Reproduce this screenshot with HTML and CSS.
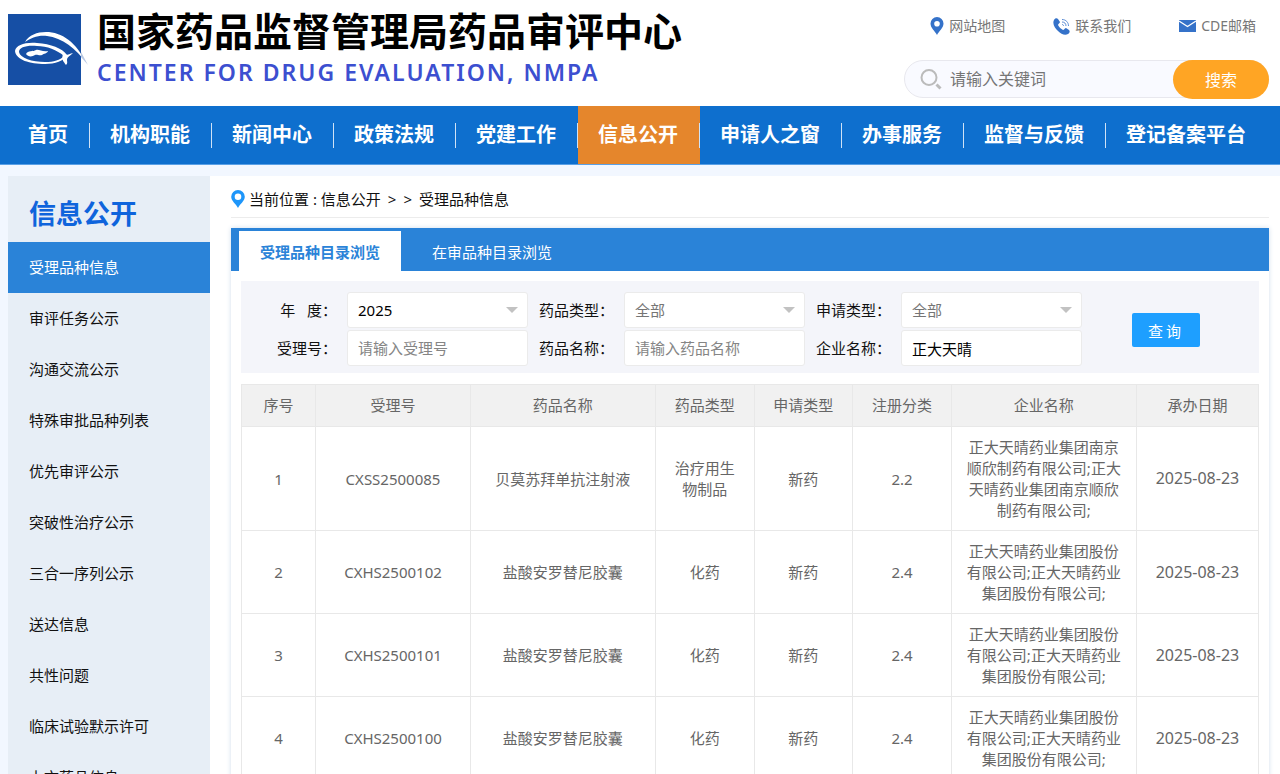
FILE: index.html
```html
<!DOCTYPE html>
<html lang="zh-CN">

<head>
  <meta charset="utf-8">
  <meta name="viewport" content="width=device-width, initial-scale=1">
  <title>国家药品监督管理局药品审评中心</title>
  <link rel="stylesheet" href="styles.css">
</head>

<body>
  <header class="header">
    <div class="logo">
      <svg class="logo-mark" viewBox="0 0 80 72" width="80" height="72" aria-hidden="true">
        <rect width="73" height="71" fill="#164fa5"/>
        <path d="M17 28C21 21 29 18 38 18C54 18 68 28 79 50C68 34 54 24 39 22C30 21 23 24 17 28Z" fill="#fff"/>
        <path d="M73 38L80 51L73 43Z" fill="#b9c8e2"/>
        <path fill="#fff" fill-rule="evenodd" d="M7 37C8 31 17 28 29 29C43 30 54 34 59 41C56 47 47 50 37 50C22 50 8 46 7 37ZM11 38C12 44 24 48 37 48C46 48 52 46 56 42C49 36 39 32 29 32C19 31 11 33 11 38Z"/>
        <path d="M55 40C58 42 61 40 65 39C62 42 59 43 59 46C59 48 60 49 58 51C56 48 53 46 55 40Z" fill="#fff"/>
        <path d="M18 40C20 36 25 38 28 36C31 35 34 38 40 37C39 40 36 39 34 41C31 42 29 40 27 41C24 43 20 43 18 40Z" fill="#fff"/>
      </svg>
      <div>
        <h1 class="logo-title">国家药品监督管理局药品审评中心</h1>
        <p class="logo-sub">CENTER FOR DRUG EVALUATION, NMPA</p>
      </div>
    </div>
    <div class="header-right">
      <div class="links">
        <a href="#">
          <svg viewBox="0 0 14 18" width="14" height="18" aria-hidden="true"><path fill="#3572c9" fill-rule="evenodd" d="M7 0A6.5 6.5 0 0 0 .5 6.500C.5 11 5 14 7 18C9 14 13.500 11 13.500 6.500A6.500 6.500 0 0 0 7 0ZM7 4A2.800 2.800 0 1 1 7 9.600A2.800 2.800 0 1 1 7 4Z"/></svg>
          网站地图
        </a>
        <a href="#">
          <svg viewBox="0 0 17 17" width="17" height="17" aria-hidden="true"><path fill="#3572c9" d="M1 2C2 0 4 0 5 1L7 4C7 5 5 6 5 7C6 9 8 11 10 12C11 12 12 10 13 10L16 12C17 13 17 15 15 16C12 18 8 16 5 13C2 10-1 6 1 2Z"/><path fill="none" stroke="#5c8dd4" d="M9 1.500C13 1.500 15.500 4.500 15.500 8M9 4C11.500 4 13 5.500 13 8M9 6.500C10 6.500 10.500 7 10.500 8"/></svg>
          联系我们
        </a>
        <a href="#">
          <svg viewBox="0 0 17 12" width="17" height="12" aria-hidden="true"><rect width="17" height="12" fill="#3572c9"/><path d="M0 1L8.500 6.500L17 1" fill="none" stroke="#fff" stroke-width="1.200"/></svg>
          CDE邮箱
        </a>
      </div>
      <form class="search">
        <svg viewBox="0 0 22 21" width="22" height="21" aria-hidden="true"><circle cx="9" cy="8.500" r="7.500" fill="none" stroke="#bbb" stroke-width="2"/><path d="M16.500 15.500L20.500 19.500" stroke="#bbb" stroke-width="3"/></svg>
        <input type="text" placeholder="请输入关键词" aria-label="请输入关键词">
        <button type="button">搜索</button>
      </form>
    </div>
  </header>

  <nav class="nav">
    <a href="#">首页</a>
    <a href="#">机构职能</a>
    <a href="#">新闻中心</a>
    <a href="#">政策法规</a>
    <a href="#">党建工作</a>
    <a href="#" class="active">信息公开</a>
    <a href="#">申请人之窗</a>
    <a href="#">办事服务</a>
    <a href="#">监督与反馈</a>
    <a href="#">登记备案平台</a>
  </nav>

  <div class="container">
    <aside class="side">
      <h2>信息公开</h2>
      <a href="#" class="active">受理品种信息</a>
      <a href="#">审评任务公示</a>
      <a href="#">沟通交流公示</a>
      <a href="#">特殊审批品种列表</a>
      <a href="#">优先审评公示</a>
      <a href="#">突破性治疗公示</a>
      <a href="#">三合一序列公示</a>
      <a href="#">送达信息</a>
      <a href="#">共性问题</a>
      <a href="#">临床试验默示许可</a>
      <a href="#">上市药品信息</a>
    </aside>

    <main class="main">
      <div class="crumb">
        <svg viewBox="0 0 14 18" width="14" height="18" aria-hidden="true"><path fill="#1e96fa" fill-rule="evenodd" d="M7 0A6.800 6.800 0 0 0 .2 6.800C.2 11 5 14 7 18C9 14 13.800 11 13.800 6.800A6.800 6.800 0 0 0 7 0ZM7 3.500A3.300 3.300 0 1 1 7 10.100A3.300 3.300 0 1 1 7 3.500Z"/></svg>
        <span>当前位置 : <a href="#">信息公开</a></span>
        <span>&gt;</span>
        <span>&gt;</span>
        <a href="#">受理品种信息</a>
      </div>

      <div class="panel">
        <div class="tabs">
          <button type="button" class="active">受理品种目录浏览</button>
          <button type="button">在审品种目录浏览</button>
        </div>

        <form class="filter">
          <div class="field">
            <label for="year">年&nbsp;&nbsp;&nbsp;度：</label>
            <div class="select"><select id="year" class="filled"><option>2025</option></select></div>
          </div>
          <div class="field">
            <label for="drugtype">药品类型：</label>
            <div class="select"><select id="drugtype"><option>全部</option></select></div>
          </div>
          <div class="field">
            <label for="applytype">申请类型：</label>
            <div class="select"><select id="applytype"><option>全部</option></select></div>
          </div>
          <button type="button" class="query">查询</button>
          <div class="field">
            <label for="acceptid">受理号：</label>
            <input type="text" id="acceptid" placeholder="请输入受理号">
          </div>
          <div class="field">
            <label for="drugname">药品名称：</label>
            <input type="text" id="drugname" placeholder="请输入药品名称">
          </div>
          <div class="field">
            <label for="company">企业名称：</label>
            <input type="text" id="company" value="正大天晴">
          </div>
        </form>

        <table class="list">
          <thead>
            <tr>
              <th class="c-no">序号</th>
              <th class="c-id">受理号</th>
              <th class="c-name">药品名称</th>
              <th class="c-type">药品类型</th>
              <th class="c-type">申请类型</th>
              <th class="c-type">注册分类</th>
              <th class="c-name">企业名称</th>
              <th class="c-date">承办日期</th>
            </tr>
          </thead>
          <tbody>
            <tr>
              <td>1</td>
              <td>CXSS2500085</td>
              <td>贝莫苏拜单抗注射液</td>
              <td>治疗用生物制品</td>
              <td>新药</td>
              <td>2.2</td>
              <td>正大天晴药业集团南京顺欣制药有限公司;正大天晴药业集团南京顺欣制药有限公司;</td>
              <td class="date">2025-08-23</td>
            </tr>
            <tr>
              <td>2</td>
              <td>CXHS2500102</td>
              <td>盐酸安罗替尼胶囊</td>
              <td>化药</td>
              <td>新药</td>
              <td>2.4</td>
              <td>正大天晴药业集团股份有限公司;正大天晴药业集团股份有限公司;</td>
              <td class="date">2025-08-23</td>
            </tr>
            <tr>
              <td>3</td>
              <td>CXHS2500101</td>
              <td>盐酸安罗替尼胶囊</td>
              <td>化药</td>
              <td>新药</td>
              <td>2.4</td>
              <td>正大天晴药业集团股份有限公司;正大天晴药业集团股份有限公司;</td>
              <td class="date">2025-08-23</td>
            </tr>
            <tr>
              <td>4</td>
              <td>CXHS2500100</td>
              <td>盐酸安罗替尼胶囊</td>
              <td>化药</td>
              <td>新药</td>
              <td>2.4</td>
              <td>正大天晴药业集团股份有限公司;正大天晴药业集团股份有限公司;</td>
              <td class="date">2025-08-23</td>
            </tr>
          </tbody>
        </table>
      </div>
    </main>
  </div>
</body>

</html>
```
FILE: styles.css
```css
* {
  box-sizing: border-box;
}

body {
  margin: 0;
  background: #f2f7ff;
  color: #111;
  font-family: "Noto Sans", "Noto Sans CJK SC", sans-serif;
  font-size: 15px;
  line-height: 21px;
}

a {
  color: inherit;
  text-decoration: none;
}

h1, h2, p {
  margin: 0;
}

button, input, select {
  font-family: inherit;
  font-size: 15px;
}

svg {
  flex: none;
}

/* header */
.header {
  display: flex;
  justify-content: space-between;
  height: 106px;
  padding: 0 11px 0 8px;
  background: #fff;
}

.logo {
  display: flex;
  gap: 9px;
  white-space: nowrap;
}

.logo-mark {
  margin-top: 14px;
}

.logo-title {
  margin-top: 10px;
  color: #000;
  font-size: 39px;
  line-height: 42px;
}

.logo-sub {
  color: #3c4fd0;
  font-size: 23px;
  font-weight: 600;
  line-height: 40px;
  letter-spacing: 2px;
}

.header-right {
  width: 365px;
  padding-top: 15px;
}

.links {
  display: flex;
  justify-content: flex-end;
  gap: 48px;
  padding-right: 13px;
  color: #777;
  font-size: 14px;
  line-height: 22px;
}

.links a {
  display: flex;
  align-items: center;
  gap: 5px;
}

.search {
  display: flex;
  align-items: center;
  height: 38px;
  margin-top: 23px;
  padding-left: 15px;
  border: 1px solid #e8e8ee;
  border-radius: 19px;
  background: #f9faff;
}

.search input {
  flex: 1;
  min-width: 0;
  padding: 0 8px;
  border: 0;
  background: none;
  font-size: 16px;
  outline: none;
}

.search input::placeholder {
  color: #757575;
}

.search button {
  width: 96px;
  height: 39px;
  margin-right: -1px;
  padding: 0;
  border: 0;
  border-radius: 20px;
  background: #ffa524;
  color: #fff;
  font-size: 16px;
}

/* navigation */
.nav {
  display: flex;
  height: 59px;
  padding-left: 8px;
  border-bottom: 1px solid #5aa0e6;
  background: #0e6fce;
  color: #fff;
  font-size: 20px;
  font-weight: bold;
  line-height: 58px;
  white-space: nowrap;
}

.nav a {
  display: flex;
  align-items: center;
  padding-left: 20px;
}

.nav a::after {
  content: "";
  width: 1px;
  height: 25px;
  margin-left: 21px;
  background: #cfe2f6;
}

.nav a:last-child::after {
  display: none;
}

.nav .active {
  background: #e5862c;
}

/* page body */
.container {
  display: flex;
  padding: 11px 0 0 8px;
}

.side {
  flex: none;
  width: 202px;
  background: #e7eef6;
}

.side h2 {
  padding: 18px 21px 8px;
  color: #0f64dc;
  font-size: 27px;
  line-height: 40px;
}

.side a {
  display: block;
  padding: 0 21px;
  line-height: 51px;
}

.side .active {
  background: #2a83d8;
  color: #fff;
}

.main {
  flex: 1;
  min-width: 0;
  padding: 0 11px 0 21px;
  background: #fff;
}

.crumb {
  display: flex;
  align-items: center;
  gap: 7px;
  height: 42px;
  padding-top: 5px;
  border-bottom: 1px solid #ececec;
}

.crumb svg {
  margin-right: -3px;
}

.panel {
  margin-top: 10px;
  padding-bottom: 20px;
  box-shadow: 0 0 5px #d3dfec;
}

.tabs {
  display: flex;
  height: 43px;
  padding: 3px 8px 0;
  background: #2a83d8;
}

.tabs button {
  padding: 0 31px;
  border: 0;
  background: none;
  color: #fff;
}

.tabs .active {
  padding: 0 21px;
  background: #fff;
  color: #2a83d8;
  font-weight: bold;
}

/* query form */
.filter {
  display: grid;
  grid-template-columns: repeat(3, 1fr) 167px;
  gap: 2px 0;
  margin: 10px 10px 11px;
  padding: 11px 10px 7px;
  background: #f4f5fa;
}

.field {
  display: flex;
  align-items: center;
  gap: 10px;
}

.field label {
  flex: none;
  width: 86px;
  text-align: right;
  white-space: nowrap;
}

.field input,
.field select {
  width: 100%;
  min-width: 0;
  height: 36px;
  padding: 0 10px;
  border: 1px solid #ebebeb;
  border-radius: 3px;
  background: #fff;
  color: #000;
  appearance: none;
}

.field select {
  color: #757575;
}

.field .filled {
  color: #000;
}

.field input::placeholder {
  color: #858585;
}

.select {
  position: relative;
  flex: 1;
}

.select::after {
  content: "";
  position: absolute;
  top: 15px;
  right: 10px;
  border: 6px solid transparent;
  border-top-color: #c2c2c2;
  border-bottom: 0;
  pointer-events: none;
}

.query {
  grid-column: 4;
  grid-row: 1 / 3;
  align-self: center;
  width: 68px;
  height: 34px;
  margin: 2px 0 0 50px;
  padding: 0;
  border: 0;
  border-radius: 2px;
  background: #1e9fff;
  color: #fff;
  letter-spacing: 3px;
}

/* result list */
.list {
  width: calc(100% - 20px);
  margin: 0 10px;
  border-collapse: collapse;
  table-layout: fixed;
  color: #666;
  text-align: center;
}

.list th,
.list td {
  padding: 10px 15px 9px;
  border: 1px solid #e8e8e8;
}

.list th {
  padding: 10px 0;
  background: #f1f1f1;
  font-weight: normal;
}

.list .c-no { width: 7.3%; }
.list .c-id { width: 15.2%; }
.list .c-name { width: 18.2%; }
.list .c-type { width: 9.7%; }
.list .c-date { width: 12%; }

.list .date {
  padding: 0;
  font-size: 16px;
}
```
